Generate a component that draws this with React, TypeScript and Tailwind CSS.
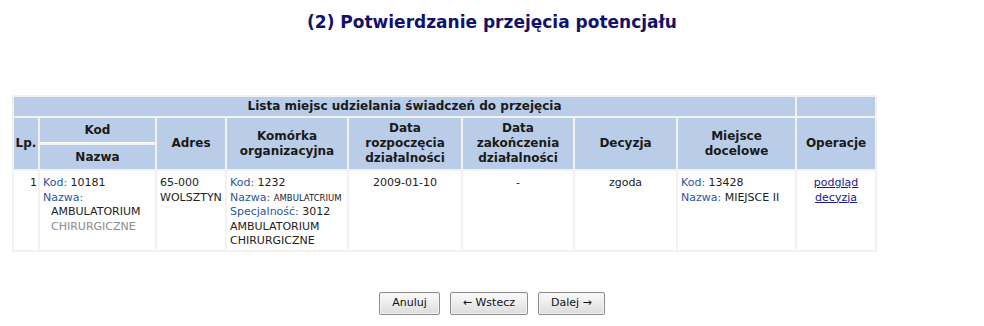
import React from "react";

const font = "font-['DejaVu_Sans','Verdana',sans-serif]";

const th = "bg-[#b9cde8] font-bold text-[12px] leading-[15px] text-[#1a1a1a] text-center align-middle px-1";
const td = "bg-white align-top text-[11px] leading-[14.5px] text-[#222] px-[3px] pt-[5px]";
const label = "text-[#2d55a0]";

const Button: React.FC<{ children: React.ReactNode }> = ({ children }) => (
  <button className="h-[23px] px-[12px] rounded-[2px] border border-[#8c8c8c] bg-gradient-to-b from-[#fbfbfb] to-[#dcdcdc] text-[11px] text-[#111] shadow-[inset_0_0_0_1px_#f4f4f4]">
    {children}
  </button>
);

export default function App() {
  return (
    <div className={`w-[984px] h-[326px] bg-white ${font}`}>
      <h1 className="pt-[11px] text-center text-[17px] leading-[22px] font-bold text-[#12126b]">
        (2) Potwierdzanie przejęcia potencjału
      </h1>

      <div className="pl-[12px] pt-[62px]">
        <table className="table-fixed border-separate border-spacing-[2px] bg-[#f2f2f2] w-[865px]">
          <colgroup>
            <col className="w-[24px]" />
            <col className="w-[115px]" />
            <col className="w-[68px]" />
            <col className="w-[120px]" />
            <col className="w-[112px]" />
            <col className="w-[110px]" />
            <col className="w-[101px]" />
            <col className="w-[117px]" />
            <col className="w-[78px]" />
          </colgroup>
          <thead>
            <tr>
              <th colSpan={8} className={`${th} h-[19px]`}>
                Lista miejsc udzielania świadczeń do przejęcia
              </th>
              <th className={th}></th>
            </tr>
            <tr>
              <th rowSpan={2} className={`${th} !px-0`}>Lp.</th>
              <th className={`${th} h-[25px] border-b border-white`}>Kod</th>
              <th rowSpan={2} className={th}>Adres</th>
              <th rowSpan={2} className={th}>Komórka<br />organizacyjna</th>
              <th rowSpan={2} className={th}>Data<br />rozpoczęcia<br />działalności</th>
              <th rowSpan={2} className={th}>Data<br />zakończenia<br />działalności</th>
              <th rowSpan={2} className={th}>Decyzja</th>
              <th rowSpan={2} className={th}>Miejsce<br />docelowe</th>
              <th rowSpan={2} className={th}>Operacje</th>
            </tr>
            <tr>
              <th className={`${th} h-[24px]`}>Nazwa</th>
            </tr>
          </thead>
          <tbody>
            <tr className="h-[79px]">
              <td className={`${td} text-right !pr-[1px]`}>1</td>
              <td className={td}>
                <div><span className={label}>Kod:</span> 10181</div>
                <div className={label}>Nazwa:</div>
                <div className="pl-[8px]">AMBULATORIUM</div>
                <div className="pl-[8px] text-[#8a8a8a]">CHIRURGICZNE</div>
              </td>
              <td className={td}>
                <div>65-000</div>
                <div>WOLSZTYN</div>
              </td>
              <td className={td}>
                <div><span className={label}>Kod:</span> 1232</div>
                <div className="whitespace-nowrap">
                  <span className={label}>Nazwa:</span> <span className="text-[8.5px]">AMBULATCRIUM</span>
                </div>
                <div><span className={label}>Specjalność:</span> 3012</div>
                <div>AMBULATORIUM</div>
                <div>CHIRURGICZNE</div>
              </td>
              <td className={`${td} text-center`}>2009-01-10</td>
              <td className={`${td} text-center`}>-</td>
              <td className={`${td} text-center`}>zgoda</td>
              <td className={td}>
                <div><span className={label}>Kod:</span> 13428</div>
                <div><span className={label}>Nazwa:</span> MIEJSCE II</div>
              </td>
              <td className={`${td} text-center`}>
                <div><a href="#" className="text-[#1a1a8c] underline">podgląd</a></div>
                <div><a href="#" className="text-[#1a1a8c] underline">decyzja</a></div>
              </td>
            </tr>
          </tbody>
        </table>
      </div>

      <div className="flex justify-center gap-[10px] pt-[40px]">
        <Button>Anuluj</Button>
        <Button>← Wstecz</Button>
        <Button>Dalej →</Button>
      </div>
    </div>
  );
}
